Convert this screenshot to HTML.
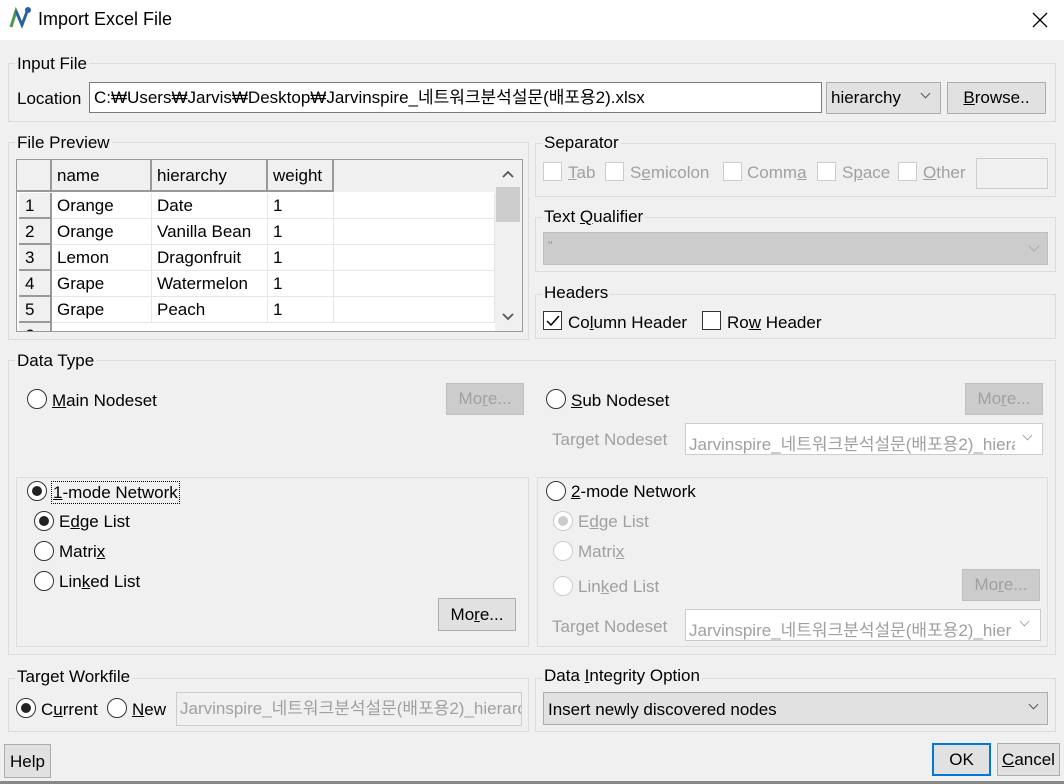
<!DOCTYPE html>
<html><head><meta charset="utf-8"><style>
*{box-sizing:border-box;margin:0;padding:0}
body{width:1064px;height:784px;background:#f0f0f0;font-family:"Liberation Sans","Noto Sans CJK KR",sans-serif;font-size:17px;color:#000;position:relative;overflow:hidden}
.a{position:absolute;white-space:nowrap}
.g{position:absolute;border:1px solid #dcdcdc}
.lg{position:absolute;background:#f0f0f0;padding:0 2px;line-height:20px}
.btn{position:absolute;background:#e1e1e1;border:1px solid #adadad;text-align:center}
.dis{background:#cccccc;border-color:#bfbfbf;color:#a0a0a0}
.tb{position:absolute;background:#fff;border:1px solid #7a7a7a;overflow:hidden;white-space:nowrap}
.cb{position:absolute;width:19px;height:19px;border:1px solid #333;background:#fff}
.cbd{border-color:#cccccc}
.rd{position:absolute;width:20px;height:20px;border:1px solid #333;border-radius:50%;background:#fff}
.rd.on::after{content:"";position:absolute;left:4px;top:4px;width:10px;height:10px;border-radius:50%;background:#222}
.rd.d{border-color:#ccc}
.rd.d.on::after{background:#ccc}
.gr{color:#a0a0a0}
u{text-decoration:underline}
.cell{position:absolute;height:26px;line-height:26px;padding-left:5px;border-right:1px solid #e6e6e6;border-bottom:1px solid #e6e6e6;background:#fff;overflow:hidden}
.hd{position:absolute;background:#f0f0f0;border-right:2px solid #999;border-bottom:2px solid #999;padding-left:5px;line-height:32px}
.rn{position:absolute;background:#f0f0f0;border-right:2px solid #999;border-bottom:2px solid #999;padding-left:6px;line-height:26px;height:26px;width:33px}
.chev{position:absolute;width:8px;height:8px;border-right:1.3px solid #555;border-bottom:1.3px solid #555;transform:rotate(45deg)}
</style></head><body>
<div class="a" style="left:0;top:0;width:1064px;height:40px;background:#fff"></div>
<svg class="a" style="left:8px;top:5px" width="26" height="26" viewBox="0 0 26 26"><path d="M3 22 L8 6 L14 20 L20 4" stroke="#4a9a4a" stroke-width="3" fill="none"/><path d="M8 6 L14 20 L20 4" stroke="#2a5fa8" stroke-width="2.5" fill="none"/><circle cx="20" cy="5" r="3" fill="#2a5fa8"/></svg>
<div class="a" style="left:38px;top:9px;font-size:18px">Import Excel File</div>
<svg class="a" style="left:1032px;top:12px" width="16" height="16"><path d="M1 1 L15 15 M15 1 L1 15" stroke="#000" stroke-width="1.3"/></svg>

<!-- Input File -->
<div class="g" style="left:8px;top:63px;width:1048px;height:59px"></div>
<div class="lg" style="left:15px;top:54px">Input File</div>
<div class="a" style="left:17px;top:89px">Location</div>
<div class="tb" style="left:89px;top:82px;width:733px;height:31px;padding-left:4px;line-height:29px">C:₩Users₩Jarvis₩Desktop₩Jarvinspire_네트워크분석설문(배포용2).xlsx</div>
<div class="btn" style="left:826px;top:82px;width:115px;height:32px;text-align:left;padding-left:4px;line-height:30px">hierarchy</div>
<div class="chev" style="left:922px;top:90px;width:7px;height:7px"></div>
<div class="btn" style="left:947px;top:82px;width:99px;height:32px;line-height:30px"><u>B</u>rowse..</div>

<!-- File Preview -->
<div class="g" style="left:8px;top:142px;width:521px;height:198px"></div>
<div class="lg" style="left:15px;top:133px">File Preview</div>
<div class="a" style="left:16px;top:159px;width:507px;height:173px;border:1px solid #999;background:#fff;overflow:hidden">
 <div class="a" style="left:0;top:0;width:478px;height:32px;background:#f0f0f0"></div>
 <div class="hd" style="left:0;top:0;width:35px;height:32px"></div>
 <div class="hd" style="left:35px;top:0;width:100px;height:32px">name</div>
 <div class="hd" style="left:135px;top:0;width:116px;height:32px">hierarchy</div>
 <div class="hd" style="left:251px;top:0;width:66px;height:32px">weight</div>
 <div class="rn" style="left:2px;top:33px">1</div><div class="cell" style="left:35px;top:33px;width:100px">Orange</div><div class="cell" style="left:135px;top:33px;width:116px">Date</div><div class="cell" style="left:251px;top:33px;width:66px">1</div><div class="cell" style="left:317px;top:33px;width:161px"></div>
 <div class="rn" style="left:2px;top:59px">2</div><div class="cell" style="left:35px;top:59px;width:100px">Orange</div><div class="cell" style="left:135px;top:59px;width:116px">Vanilla Bean</div><div class="cell" style="left:251px;top:59px;width:66px">1</div><div class="cell" style="left:317px;top:59px;width:161px"></div>
 <div class="rn" style="left:2px;top:85px">3</div><div class="cell" style="left:35px;top:85px;width:100px">Lemon</div><div class="cell" style="left:135px;top:85px;width:116px">Dragonfruit</div><div class="cell" style="left:251px;top:85px;width:66px">1</div><div class="cell" style="left:317px;top:85px;width:161px"></div>
 <div class="rn" style="left:2px;top:111px">4</div><div class="cell" style="left:35px;top:111px;width:100px">Grape</div><div class="cell" style="left:135px;top:111px;width:116px">Watermelon</div><div class="cell" style="left:251px;top:111px;width:66px">1</div><div class="cell" style="left:317px;top:111px;width:161px"></div>
 <div class="rn" style="left:2px;top:137px">5</div><div class="cell" style="left:35px;top:137px;width:100px">Grape</div><div class="cell" style="left:135px;top:137px;width:116px">Peach</div><div class="cell" style="left:251px;top:137px;width:66px">1</div><div class="cell" style="left:317px;top:137px;width:161px"></div>
 <div class="rn" style="left:2px;top:163px">6</div>
 <div class="a" style="left:478px;top:0;width:27px;height:171px;background:#f0f0f0"></div>
 <div class="a" style="left:479px;top:27px;width:24px;height:35px;background:#cdcdcd"></div>
 <svg class="a" style="left:484px;top:9px" width="14" height="10"><path d="M2 8 L7 3 L12 8" stroke="#555" stroke-width="1.8" fill="none"/></svg>
 <svg class="a" style="left:484px;top:152px" width="14" height="10"><path d="M2 2 L7 7 L12 2" stroke="#555" stroke-width="1.8" fill="none"/></svg>
</div>

<!-- Separator -->
<div class="g" style="left:535px;top:143px;width:521px;height:54px"></div>
<div class="lg" style="left:542px;top:133px">Separator</div>
<div class="cb cbd" style="left:543px;top:162px"></div><div class="a gr" style="left:568px;top:163px"><u>T</u>ab</div>
<div class="cb cbd" style="left:605px;top:162px"></div><div class="a gr" style="left:630px;top:163px">S<u>e</u>micolon</div>
<div class="cb cbd" style="left:723px;top:162px"></div><div class="a gr" style="left:747px;top:163px">Comm<u>a</u></div>
<div class="cb cbd" style="left:817px;top:162px"></div><div class="a gr" style="left:842px;top:163px">S<u>p</u>ace</div>
<div class="cb cbd" style="left:898px;top:162px"></div><div class="a gr" style="left:923px;top:163px"><u>O</u>ther</div>
<div class="a" style="left:976px;top:158px;width:72px;height:31px;border:1px solid #ccc;background:#f0f0f0"></div>

<!-- Text Qualifier -->
<div class="g" style="left:535px;top:217px;width:521px;height:55px"></div>
<div class="lg" style="left:542px;top:207px">Text <u>Q</u>ualifier</div>
<div class="a" style="left:543px;top:232px;width:505px;height:33px;background:#cccccc;border:1px solid #bfbfbf;color:#999;padding-left:4px;line-height:26px;font-size:13px">"</div>
<div class="chev" style="left:1030px;top:242px;border-color:#aaa"></div>

<!-- Headers -->
<div class="g" style="left:535px;top:294px;width:521px;height:45px"></div>
<div class="lg" style="left:542px;top:283px">Headers</div>
<div class="cb" style="left:543px;top:311px"></div>
<svg class="a" style="left:545px;top:313px" width="16" height="16"><path d="M2 8 L6 12 L14 3" stroke="#000" stroke-width="1.5" fill="none"/></svg>
<div class="a" style="left:568px;top:313px">Co<u>l</u>umn Header</div>
<div class="cb" style="left:702px;top:311px"></div>
<div class="a" style="left:727px;top:313px">Ro<u>w</u> Header</div>

<!-- Data Type -->
<div class="g" style="left:8px;top:360px;width:1048px;height:295px"></div>
<div class="lg" style="left:15px;top:351px">Data Type</div>
<div class="rd" style="left:27px;top:389px"></div><div class="a" style="left:52px;top:391px"><u>M</u>ain Nodeset</div>
<div class="btn dis" style="left:446px;top:383px;width:78px;height:32px;line-height:30px">Mo<u>r</u>e...</div>
<div class="rd" style="left:546px;top:389px"></div><div class="a" style="left:571px;top:391px"><u>S</u>ub Nodeset</div>
<div class="btn dis" style="left:965px;top:383px;width:78px;height:32px;line-height:30px">Mo<u>r</u>e...</div>
<div class="a gr" style="left:552px;top:430px">Target Nodeset</div>
<div class="a" style="left:685px;top:423px;width:358px;height:32px;border:1px solid #ccc;background:#fff"></div>
<div class="a gr" style="left:689px;top:430px;width:326px;overflow:hidden">Jarvinspire_네트워크분석설문(배포용2)_hierarchy</div>
<div class="chev" style="left:1024px;top:432px;border-color:#aaa;width:7px;height:7px"></div>

<div class="g" style="left:16px;top:477px;width:513px;height:170px"></div>
<div class="rd on" style="left:27px;top:481px"></div>
<div class="a" style="left:51px;top:481px;border:1px dotted #000;padding:0 1px;line-height:21px"><u>1</u>-mode Network</div>
<div class="rd on" style="left:34px;top:511px"></div><div class="a" style="left:59px;top:512px">E<u>d</u>ge List</div>
<div class="rd" style="left:34px;top:541px"></div><div class="a" style="left:59px;top:542px">Matri<u>x</u></div>
<div class="rd" style="left:34px;top:571px"></div><div class="a" style="left:59px;top:572px">Lin<u>k</u>ed List</div>
<div class="btn" style="left:438px;top:598px;width:78px;height:33px;line-height:31px">Mo<u>r</u>e...</div>

<div class="g" style="left:537px;top:477px;width:511px;height:170px"></div>
<div class="rd" style="left:546px;top:481px"></div><div class="a" style="left:571px;top:482px"><u>2</u>-mode Network</div>
<div class="rd d on" style="left:553px;top:511px"></div><div class="a gr" style="left:578px;top:512px">E<u>d</u>ge List</div>
<div class="rd d" style="left:553px;top:541px"></div><div class="a gr" style="left:578px;top:542px">Matri<u>x</u></div>
<div class="rd d" style="left:553px;top:576px"></div><div class="a gr" style="left:578px;top:577px">Lin<u>k</u>ed List</div>
<div class="btn dis" style="left:962px;top:569px;width:78px;height:32px;line-height:30px">Mo<u>r</u>e...</div>
<div class="a gr" style="left:552px;top:617px">Target Nodeset</div>
<div class="a" style="left:685px;top:609px;width:356px;height:32px;border:1px solid #ccc;background:#fff"></div>
<div class="a gr" style="left:689px;top:616px;width:323px;overflow:hidden">Jarvinspire_네트워크분석설문(배포용2)_hierarchy</div>
<div class="chev" style="left:1021px;top:618px;border-color:#aaa;width:7px;height:7px"></div>

<!-- Target Workfile -->
<div class="g" style="left:8px;top:678px;width:521px;height:54px"></div>
<div class="lg" style="left:15px;top:667px">Target Workfile</div>
<div class="rd on" style="left:16px;top:698px"></div><div class="a" style="left:41px;top:700px">C<u>u</u>rrent</div>
<div class="rd" style="left:107px;top:698px"></div><div class="a" style="left:132px;top:700px"><u>N</u>ew</div>
<div class="a gr" style="left:176px;top:692px;width:346px;height:34px;border:1px solid #ccc;background:#f0f0f0;padding-left:3px;line-height:32px;overflow:hidden">Jarvinspire_네트워크분석설문(배포용2)_hierarchy</div>

<!-- Data Integrity -->
<div class="g" style="left:535px;top:678px;width:521px;height:54px"></div>
<div class="lg" style="left:542px;top:666px">Data <u>I</u>ntegrity Option</div>
<div class="btn" style="left:543px;top:692px;width:505px;height:33px;text-align:left;padding-left:4px;line-height:33px">Insert newly discovered nodes</div>
<div class="chev" style="left:1030px;top:701px;width:7px;height:7px"></div>

<!-- Bottom buttons -->
<div class="btn" style="left:4px;top:744px;width:47px;height:34px;line-height:34px">Help</div>
<div class="btn" style="left:932px;top:743px;width:59px;height:33px;border:2px solid #0078d7;line-height:30px">OK</div>
<div class="btn" style="left:997px;top:743px;width:63px;height:33px;line-height:32px"><u>C</u>ancel</div>
<div class="a" style="left:0;top:781px;width:1064px;height:3px;background:#888"></div>
</body></html>
